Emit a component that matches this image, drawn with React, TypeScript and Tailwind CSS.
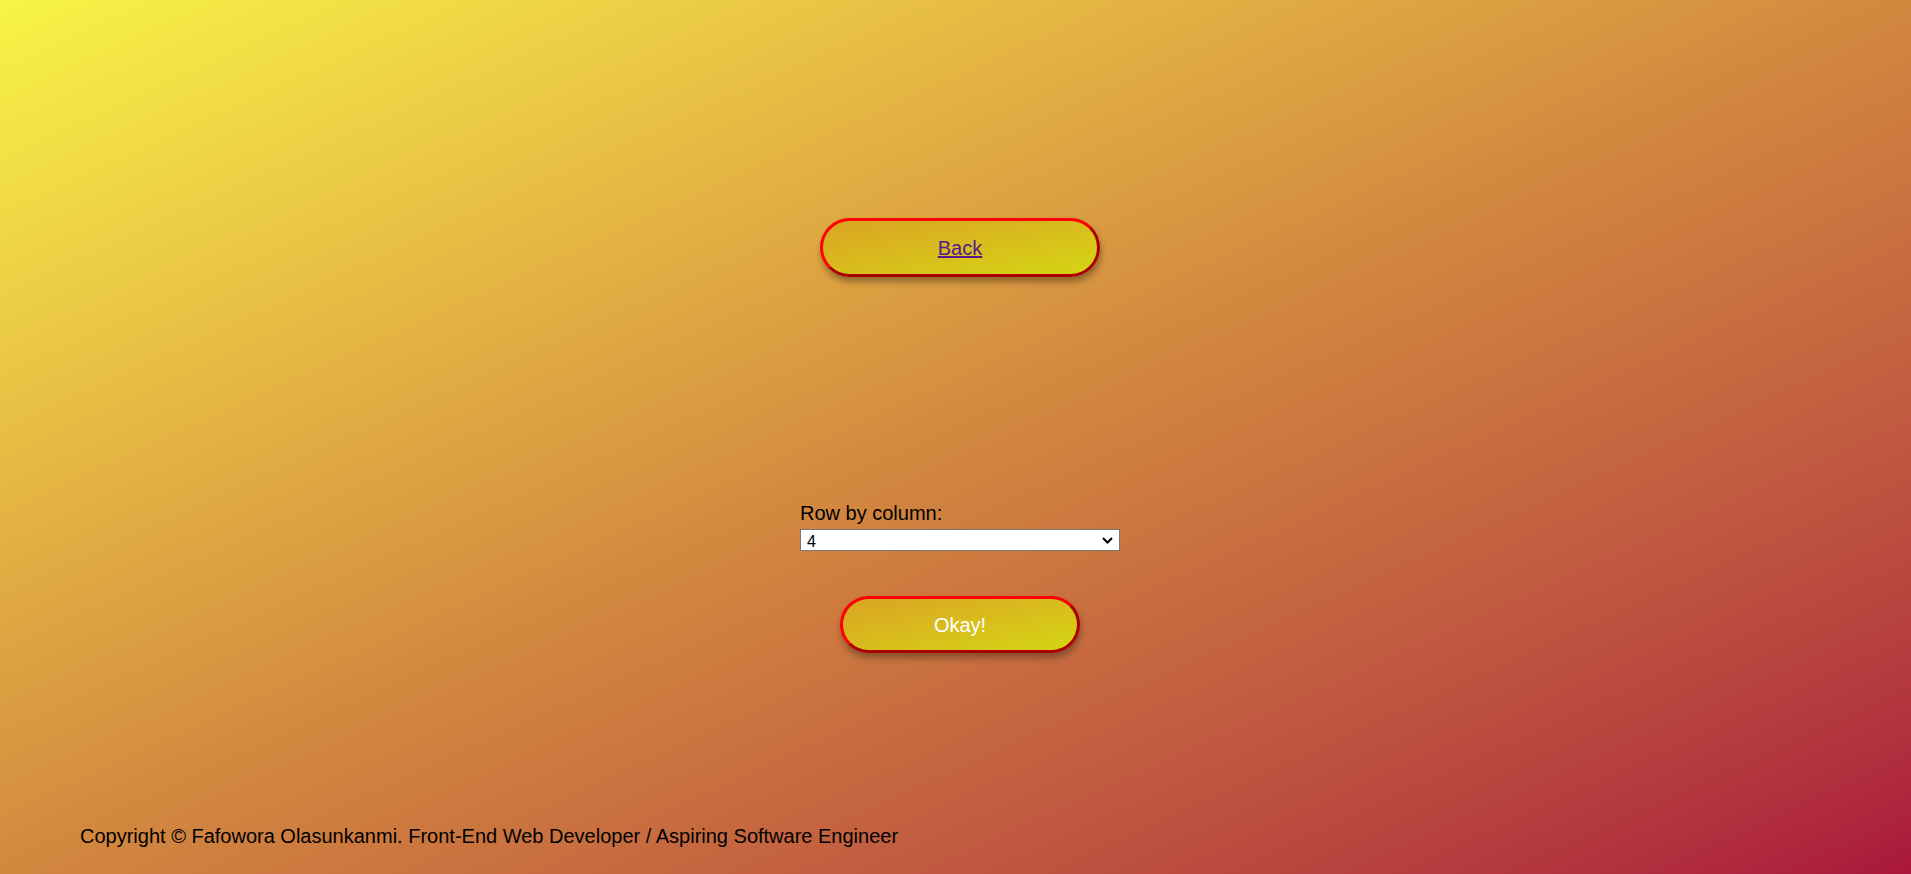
import { useState } from "react";

const font = { fontFamily: '"Liberation Sans", Arial, sans-serif' };

const pill =
  "rounded-full border-[3px] border-[#ff0000] [border-style:outset] bg-linear-to-br from-[#d9a423] to-[#d5d512] shadow-[1px_5px_6px_rgba(60,40,20,0.45)] flex items-center justify-center text-[20px]";

export default function App() {
  const [size, setSize] = useState("4");

  return (
    <div
      className="h-screen w-full overflow-hidden bg-linear-to-br from-[#f8f446] via-[#d2883f] to-[#aa163c] flex flex-col"
      style={font}
    >
      {/* centred column, sits a little right of middle in the original */}
      <div className="flex flex-col items-center pl-[9px]">
        <button className={`${pill} mt-[218px] w-[280px] h-[59px]`}>
          <a href="#" className="text-[#551a8b] underline">
            Back
          </a>
        </button>

        <div className="mt-[225px] w-[320px] flex flex-col">
          <label className="text-[20px] leading-[23px] text-black">Row by column:</label>
          <div className="relative mt-[4px] h-[22px] w-[320px]">
            <select
              value={size}
              onChange={(e) => setSize(e.target.value)}
              className="appearance-none h-[22px] w-[320px] bg-white border border-[#767676] text-[16px] text-black pl-[6px] pr-[20px]"
              style={font}
            >
              <option>3</option>
              <option>4</option>
              <option>5</option>
              <option>6</option>
            </select>
            <svg
              className="pointer-events-none absolute right-[7px] top-[8px]"
              width="11"
              height="7"
              viewBox="0 0 11 7"
            >
              <path d="M1 1l4.5 4.5L10 1" fill="none" stroke="#000" strokeWidth="2" />
            </svg>
          </div>
        </div>

        <button className={`${pill} mt-[45px] w-[240px] h-[57px] text-white`}>Okay!</button>
      </div>

      <footer className="mt-auto mb-[26px] pl-[80px] text-[20px] leading-[23px] text-black">
        Copyright © Fafowora Olasunkanmi. Front-End Web Developer / Aspiring Software Engineer
      </footer>
    </div>
  );
}
